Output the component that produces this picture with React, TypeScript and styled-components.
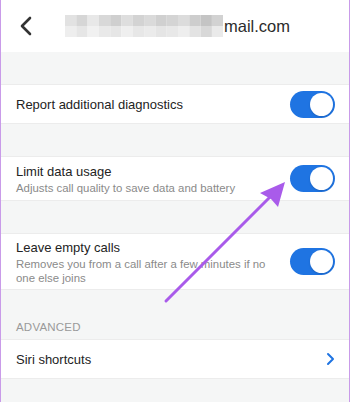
import React from 'react';
import styled, { createGlobalStyle } from 'styled-components';

const GlobalStyle = createGlobalStyle`
  html, body {
    margin: 0;
    padding: 0;
    background: #f5f6f6;
  }
  body {
    font-family: 'Liberation Sans', Arial, sans-serif;
    -webkit-font-smoothing: antialiased;
  }
`;

const Screen = styled.div`
  position: relative;
  width: 350px;
  height: 402px;
  box-sizing: border-box;
  overflow: hidden;
  background: #f5f6f6;
  border-left: 1px solid #c99be9;
  border-right: 1px solid #c99be9;
`;

const Header = styled.div`
  display: flex;
  align-items: center;
  height: 52px;
  background: #ffffff;
  padding-left: 18px;
`;

const BackButton = styled.div`
  display: flex;
  align-items: center;
  width: 16px;
  height: 20px;
  margin-right: 30px;
`;

const Email = styled.div`
  display: flex;
  align-items: center;
  font-size: 16.5px;
  color: #2b2b2b;
`;

const Gap = styled.div<{ h: number }>`
  height: ${({ h }) => h}px;
`;

const Row = styled.div<{ h: number }>`
  display: flex;
  align-items: center;
  height: ${({ h }) => h}px;
  box-sizing: border-box;
  background: #ffffff;
  padding: 0 14px 0 15px;
  border-top: 1px solid #ececec;
  border-bottom: 1px solid #ececec;
`;

const Content = styled.div`
  flex: 1;
  display: flex;
  flex-direction: column;
`;

const Title = styled.div`
  font-size: 13px;
  color: #232323;
  line-height: 17px;
`;

const Subtitle = styled.div`
  font-size: 11.4px;
  color: #8a8a8a;
  line-height: 14px;
  margin-top: 1px;
  padding-right: 20px;
`;

const SectionLabel = styled.div`
  height: 49px;
  display: flex;
  align-items: flex-end;
  padding: 0 15px 6px;
  box-sizing: border-box;
  font-size: 11.5px;
  color: #9a9a9a;
  letter-spacing: 0.2px;
`;

const Switch = styled.div`
  flex: none;
  width: 45px;
  height: 27px;
  border-radius: 14px;
  background: #1f74e2;
  display: flex;
  align-items: center;
  justify-content: flex-end;
  padding: 0 2px;
  box-sizing: border-box;
`;

const Knob = styled.div`
  width: 23px;
  height: 23px;
  border-radius: 50%;
  background: #ffffff;
  box-shadow: 0 1px 2px rgba(0, 0, 0, 0.15);
`;

const Chevron = styled.svg`
  flex: none;
  margin-right: 0;
`;

const Arrow = styled.svg`
  position: absolute;
  left: 0;
  top: 0;
  pointer-events: none;
`;

const mosaic = [
  ['#e2e2e2', '#d6d6d6', '#e8e8e8', '#d8d8d8', '#cfcfcf', '#dedede', '#d3d3d3', '#dadada', '#d0d0d0', '#d4d4d4', '#dcdcdc', '#cdcdcd', '#c4c4c4', '#d2d2d2'],
  ['#eeeeee', '#e6e6e6', '#f1f1f1', '#e9e9e9', '#e6e6e6', '#efefef', '#e7e7e7', '#ebebeb', '#e5e5e5', '#e8e8e8', '#eeeeee', '#e3e3e3', '#d8d8d8', '#eaeaea'],
];

const Blurred = () => (
  <svg width="158" height="24" viewBox="0 0 158 24" style={{ marginRight: 1 }}>
    {mosaic.map((line, r) =>
      line.map((c, i) => <rect key={`${r}-${i}`} x={i * 11.3} y={r * 11 + 1} width="11.3" height="11" fill={c} />)
    )}
  </svg>
);

const Toggle = () => (
  <Switch>
    <Knob />
  </Switch>
);

export default function App() {
  return (
    <>
      <GlobalStyle />
      <Screen>
        <Header>
          <BackButton>
            <svg width="14" height="20" viewBox="0 0 14 20">
              <path d="M11 2 L3 10 L11 18" fill="none" stroke="#333" strokeWidth="2.6" strokeLinecap="round" strokeLinejoin="round" />
            </svg>
          </BackButton>
          <Email>
            <Blurred />
            mail.com
          </Email>
        </Header>
        <Gap h={32} />
        <Row h={40}>
          <Content>
            <Title>Report additional diagnostics</Title>
          </Content>
          <Toggle />
        </Row>
        <Gap h={32} />
        <Row h={45}>
          <Content>
            <Title>Limit data usage</Title>
            <Subtitle>Adjusts call quality to save data and battery</Subtitle>
          </Content>
          <Toggle />
        </Row>
        <Gap h={32} />
        <Row h={57}>
          <Content>
            <Title>Leave empty calls</Title>
            <Subtitle>Removes you from a call after a few minutes if no one else joins</Subtitle>
          </Content>
          <Toggle />
        </Row>
        <SectionLabel>ADVANCED</SectionLabel>
        <Row h={40}>
          <Content>
            <Title>Siri shortcuts</Title>
          </Content>
          <Chevron width="10" height="14" viewBox="0 0 10 14">
            <path d="M3 2 L8 7 L3 12" fill="none" stroke="#1f74e2" strokeWidth="2" strokeLinecap="round" strokeLinejoin="round" />
          </Chevron>
        </Row>
        <Arrow width="350" height="402" viewBox="0 0 350 402">
          <path d="M165 301 L270 196" stroke="#a95bea" strokeWidth="3" strokeLinecap="round" />
          <path d="M284 182 L277 207 L270 199 L259 193 Z" fill="#a95bea" />
        </Arrow>
      </Screen>
    </>
  );
}
